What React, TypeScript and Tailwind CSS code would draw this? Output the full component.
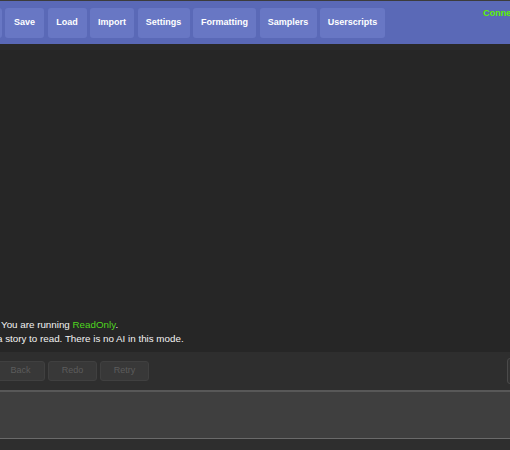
import React from "react";

const topButtons: { label: string; w: string }[] = [
  { label: "", w: "w-[39px]" },
  { label: "Save", w: "w-[39px]" },
  { label: "Load", w: "w-[39px]" },
  { label: "Import", w: "w-[44px]" },
  { label: "Settings", w: "w-[52px]" },
  { label: "Formatting", w: "w-[63px]" },
  { label: "Samplers", w: "w-[57px]" },
  { label: "Userscripts", w: "w-[65px]" },
];

export default function App() {
  return (
    <div
      className="w-[510px] h-[450px] overflow-hidden bg-[#2e2e2e] flex flex-col"
      style={{ fontFamily: '"Liberation Sans", Arial, sans-serif' }}
    >
      <div className="h-[1px] bg-[#3c3c3c] shrink-0" />
      <div className="h-[43px] bg-[#5a69b7] flex items-start shrink-0 overflow-hidden">
        <div className="flex gap-[3.5px] pt-[7px] ml-[-37.5px] shrink-0">
          {topButtons.map((b, i) => (
            <div
              key={i}
              className={`${b.w} h-[30px] rounded-[3px] bg-[#6877c4] flex items-center justify-center text-white font-bold text-[9px] shrink-0`}
            >
              {b.label}
            </div>
          ))}
        </div>
        <div className="ml-[98px] pt-[6px] text-[#5cf500] font-bold text-[9px] whitespace-nowrap shrink-0">
          Connected
        </div>
      </div>
      <div className="h-[6px] bg-[#2a2a2a] shrink-0" />
      <div className="flex-1 bg-[#262626] flex flex-col justify-end pb-[6px] text-[#f2f2f2] text-[9.8px] leading-[14px] whitespace-nowrap overflow-hidden">
        <div className="ml-[1px]">
          You are running <span className="text-[#4fd61f]">ReadOnly</span>.
        </div>
        <div className="ml-[-3px]">a story to read. There is no AI in this mode.</div>
      </div>
      <div className="h-[38px] bg-[#2e2e2e] shrink-0 flex items-start overflow-hidden">
        <div className="flex gap-[3px] pt-[9px] ml-[-4px] shrink-0">
          {["Back", "Redo", "Retry"].map((t) => (
            <div
              key={t}
              className="w-[49px] h-[20px] rounded-[3px] bg-[#383838] border border-[#404040] flex items-center justify-center text-[#5c5c5c] text-[9px] shrink-0"
            >
              {t}
            </div>
          ))}
        </div>
        <div className="ml-[358px] mt-[6px] w-[40px] h-[26px] rounded-[3px] border border-[#4a4a4a] bg-[#333333] shrink-0" />
      </div>
      <div className="h-[2px] bg-[#585858] shrink-0" />
      <div className="h-[46px] bg-[#3f3f3f] shrink-0" />
      <div className="h-[1px] bg-[#6a6a6a] shrink-0" />
      <div className="h-[11px] bg-[#2e2e2e] shrink-0" />
    </div>
  );
}
